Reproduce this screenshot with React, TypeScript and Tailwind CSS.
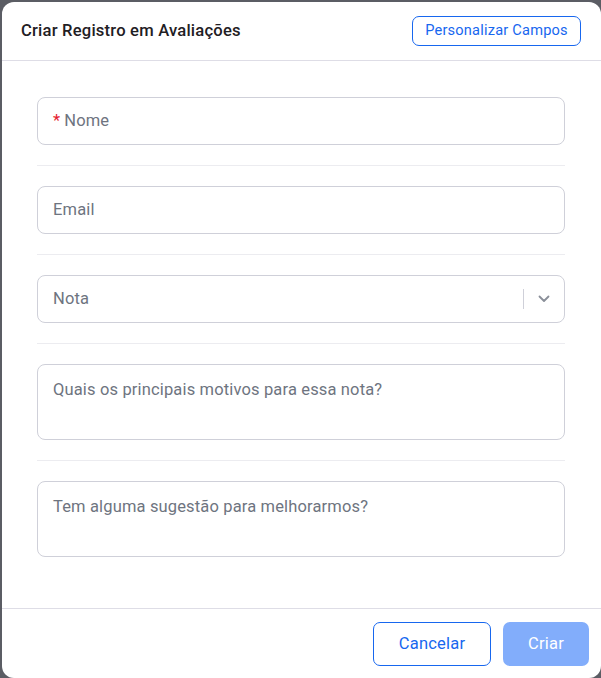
import React from "react";

function Divider() {
  return <div className="h-px bg-[#ececf0]" />;
}

export default function App() {
  return (
    <div
      className="w-[601px] h-[678px] bg-[#5b5d64] pl-[2px] pt-[2px] overflow-hidden"
      style={{ fontFamily: "Roboto, 'Noto Sans', sans-serif" }}
    >
      <div className="w-[599px] h-[676px] bg-white rounded-xl flex flex-col">
        <div className="h-[59px] shrink-0 flex items-center justify-between pl-[19px] pr-[20px] border-b border-[#dedde6]">
          <h1 className="text-[16.6px] font-medium text-[#1f2024] tracking-[0.2px]">
            Criar Registro em Avaliações
          </h1>
          <button className="h-[30px] w-[169px] border border-[#1767ef] rounded-[7px] text-[14.6px] text-[#1767ef] tracking-[0.2px]">
            Personalizar Campos
          </button>
        </div>
        <div className="flex-1 pt-[36px] pl-[35px] pr-[36px] flex flex-col gap-[20px]">
          <div className="h-[48px] border border-[#cfd0d9] rounded-lg flex items-center px-[15px] pt-[1px] text-[16.5px] text-[#6e7480] tracking-[0.15px]">
            <span className="text-[#e5202e] mr-[4px]">*</span>Nome
          </div>
          <Divider />
          <div className="h-[48px] border border-[#cfd0d9] rounded-lg flex items-center px-[15px] pt-[1px] text-[16.5px] text-[#6e7480] tracking-[0.15px]">
            Email
          </div>
          <Divider />
          <div className="h-[48px] border border-[#cfd0d9] rounded-lg flex items-center pl-[15px] text-[16.5px] text-[#6e7480] tracking-[0.15px]">
            <span className="flex-1 pt-[1px]">Nota</span>
            <div className="w-px h-[20px] bg-[#cfd0d9]" />
            <div className="w-[40px] flex justify-center">
              <svg width="12" height="8" viewBox="0 0 12 8" fill="none">
                <path d="M1.5 1.5 6 6l4.5-4.5" stroke="#8a8f99" strokeWidth="1.8" strokeLinecap="round" strokeLinejoin="round" />
              </svg>
            </div>
          </div>
          <Divider />
          <div className="h-[76px] border border-[#cfd0d9] rounded-lg px-[15px] pt-[13px] text-[16.5px] text-[#6e7480] tracking-[0.15px]">
            Quais os principais motivos para essa nota?
          </div>
          <Divider />
          <div className="h-[76px] border border-[#cfd0d9] rounded-lg px-[15px] pt-[13px] text-[16.5px] text-[#6e7480] tracking-[0.15px]">
            Tem alguma sugestão para melhorarmos?
          </div>
        </div>
        <div className="h-[70px] shrink-0 border-t border-[#dedde6] flex items-start justify-end gap-[12px] pt-[13px] pr-[12px]">
          <button className="w-[118px] h-[44px] border border-[#1767ef] rounded-[7px] text-[16.5px] text-[#1767ef] tracking-[0.2px]">
            Cancelar
          </button>
          <button className="w-[86px] h-[44px] bg-[#82adfb] rounded-[7px] text-[16.5px] text-white tracking-[0.2px]">
            Criar
          </button>
        </div>
      </div>
    </div>
  );
}
